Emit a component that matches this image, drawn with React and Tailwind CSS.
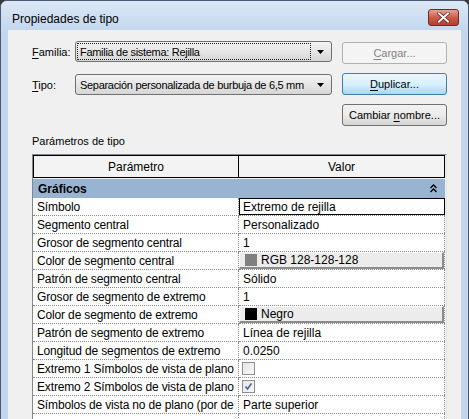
import React from 'react';

const rows = [
  { label: 'Símbolo', value: 'Extremo de rejilla', kind: 'selected' },
  { label: 'Segmento central', value: 'Personalizado' },
  { label: 'Grosor de segmento central', value: '1' },
  { label: 'Color de segmento central', value: 'RGB 128-128-128', kind: 'color', swatch: 'bg-[#808080]' },
  { label: 'Patrón de segmento central', value: 'Sólido' },
  { label: 'Grosor de segmento de extremo', value: '1' },
  { label: 'Color de segmento de extremo', value: 'Negro', kind: 'color', swatch: 'bg-black' },
  { label: 'Patrón de segmento de extremo', value: 'Línea de rejilla' },
  { label: 'Longitud de segmentos de extremo', value: '0.0250' },
  { label: 'Extremo 1 Símbolos de vista de plano', kind: 'check', checked: false },
  { label: 'Extremo 2 Símbolos de vista de plano', kind: 'check', checked: true },
  { label: 'Símbolos de vista no de plano (por de', value: 'Parte superior' },
  { label: '', value: '' },
];

function Combo({ text, focused }) {
  return (
    <div className="flex h-[21px] w-[257px] items-center rounded-[3px] border border-[#707070] bg-gradient-to-b from-[#f3f3f3] via-[#e6e6e6] to-[#d6d6d6] pl-[1px] pr-[3px]">
      <div
        className={
          'flex h-[17px] flex-1 items-center overflow-hidden whitespace-nowrap pl-[2px] tracking-[-0.3px] ' +
          (focused ? 'border border-dotted border-[#202020]' : 'border border-transparent')
        }
      >
        {text}
      </div>
      <svg width="14" height="8" viewBox="0 0 14 8" className="ml-[3px] shrink-0">
        <polygon points="3,2 10,2 6.5,6" fill="#000" />
      </svg>
    </div>
  );
}

function Mnemo({ before = '', ch, after = '' }) {
  return (
    <span className="whitespace-pre">
      {before}
      <span className="underline underline-offset-[2px]">{ch}</span>
      {after}
    </span>
  );
}

function CheckBox({ checked }) {
  return (
    <div className="flex h-[13px] w-[13px] items-center justify-center border border-[#8e8f8f] bg-gradient-to-br from-[#e6e6e6] to-[#f8f8f8]">
      {checked && (
        <svg width="9" height="9" viewBox="0 0 9 9">
          <path d="M1.5 4.5 L3.5 7 L7.5 1.5" stroke="#4c61a0" strokeWidth="1.6" fill="none" />
        </svg>
      )}
    </div>
  );
}

function ValueCell({ row }) {
  if (row.kind === 'selected') {
    return (
      <div className="flex h-full w-[206px] items-center border border-black pl-[3px]">
        {row.value}
      </div>
    );
  }
  if (row.kind === 'color') {
    return (
      <div className="flex h-full w-[206px] border-r border-dotted border-[#8a8a8a]">
        <div className="flex flex-1 items-center border-t border-l border-white border-b-2 border-r-2 border-b-[#8c8c8c] border-r-[#8c8c8c] bg-[#ececec] pl-[5px]">
          <div className={'mr-[4px] h-[12px] w-[12px] ' + row.swatch} />
          {row.value}
        </div>
      </div>
    );
  }
  if (row.kind === 'check') {
    return (
      <div className="flex h-full w-[206px] items-center border-r border-dotted border-[#8a8a8a] pl-[3px]">
        <CheckBox checked={row.checked} />
      </div>
    );
  }
  return (
    <div className="flex h-full w-[206px] items-center border-r border-dotted border-[#8a8a8a] pl-[4px]">
      {row.value}
    </div>
  );
}

export default function App() {
  return (
    <div className="h-[419px] w-[469px] overflow-hidden bg-[#3a3a3a] font-['Liberation_Sans',Arial,sans-serif] text-[12px] leading-[14px] text-black">
      <div className="flex h-[440px] flex-col rounded-t-[7px] border border-[#4a5a70] bg-[#c3d6ed]">
        {/* title bar */}
        <div className="flex h-[29px] items-start justify-between rounded-t-[6px] bg-gradient-to-b from-[#dce8f5] to-[#c4d7ee]">
          <div className="ml-[11px] mt-[11px] text-[12px] text-black">Propiedades de tipo</div>
          <div className="mr-[9px] mt-[8px] flex h-[17px] w-[31px] items-center justify-center rounded-[3px] border border-[#6d2b25] bg-gradient-to-b from-[#e4a294] via-[#cc5c4c] to-[#b93a2a]">
            <svg width="13" height="11" viewBox="0 0 13 11">
              <path d="M2 1.5 L11 9.5 M11 1.5 L2 9.5" stroke="#5a1d17" strokeWidth="3.4" strokeLinecap="square" />
              <path d="M2 1.5 L11 9.5 M11 1.5 L2 9.5" stroke="#ffffff" strokeWidth="2" strokeLinecap="square" />
            </svg>
          </div>
        </div>

        {/* client area */}
        <div className="flex flex-1 px-[7px]">
          <div className="flex flex-1 flex-col bg-[#f0f0f0]">
            <div className="flex pl-[24px] text-[11px]">
              <div className="mt-[11px] flex flex-col gap-[12px]">
                <div className="flex items-center">
                  <div className="w-[43px]">
                    <Mnemo ch="F" after="amilia:" />
                  </div>
                  <Combo text="Familia de sistema: Rejilla" focused />
                </div>
                <div className="flex items-center">
                  <div className="w-[43px]">
                    <Mnemo ch="T" after="ipo:" />
                  </div>
                  <Combo text="Separación personalizada de burbuja de 6,5 mm" />
                </div>
              </div>
              <div className="ml-[10px] mt-[12px] flex flex-col gap-[9px]">
                <button className="flex h-[22px] w-[105px] items-center justify-center rounded-[3px] border border-[#adb2b5] bg-[#f4f4f4] text-[#838383]">
                  <Mnemo ch="C" after="argar..." />
                </button>
                <button className="flex h-[22px] w-[105px] items-center justify-center rounded-[3px] border border-[#3c7fb1] bg-gradient-to-b from-[#eaf6fd] via-[#d9f0fc] to-[#a7d9f5]">
                  <Mnemo ch="D" after="uplicar..." />
                </button>
                <button className="flex h-[22px] w-[105px] items-center justify-center rounded-[3px] border border-[#707070] bg-gradient-to-b from-[#f2f2f2] via-[#ebebeb] to-[#d5d5d5]">
                  <Mnemo before="Cambiar " ch="n" after="ombre..." />
                </button>
              </div>
            </div>

            <div className="ml-[24px] mt-[8px] text-[11px]">Parámetros de tipo</div>

            <div className="ml-[24px] mt-[6px] flex w-[415px] flex-1 flex-col border-t border-l border-[#828790] border-r border-r-[#e3e3e3] bg-[#f0f0f0]">
              {/* header */}
              <div className="flex h-[23px]">
                <div className="flex w-[206px] items-center justify-center border border-black bg-[#f3f3f3]">
                  Parámetro
                </div>
                <div className="flex w-[206px] items-center justify-center border-y border-r border-black bg-[#f3f3f3]">
                  Valor
                </div>
              </div>

              {/* category */}
              <div className="mt-[1px] flex h-[19px] w-[412px] items-center justify-between bg-[#99b4d1] pl-[5px] pr-[8px]">
                <span className="font-bold">Gráficos</span>
                <svg width="7" height="9" viewBox="0 0 7 9">
                  <path d="M0.5 4 L3.5 1 L6.5 4 M0.5 8 L3.5 5 L6.5 8" stroke="#000" strokeWidth="1.3" fill="none" />
                </svg>
              </div>

              {rows.map((row, i) => (
                <div key={i} className="flex h-[18px] w-[412px] bg-white">
                  <div className="flex h-full w-[206px] items-center overflow-hidden whitespace-nowrap border-r border-b border-dotted border-[#8a8a8a] pl-[4px] tracking-[-0.15px]">
                    {row.label}
                  </div>
                  <div className="h-full border-b border-dotted border-[#8a8a8a]">
                    <ValueCell row={row} />
                  </div>
                </div>
              ))}
            </div>
          </div>
        </div>
      </div>
    </div>
  );
}
